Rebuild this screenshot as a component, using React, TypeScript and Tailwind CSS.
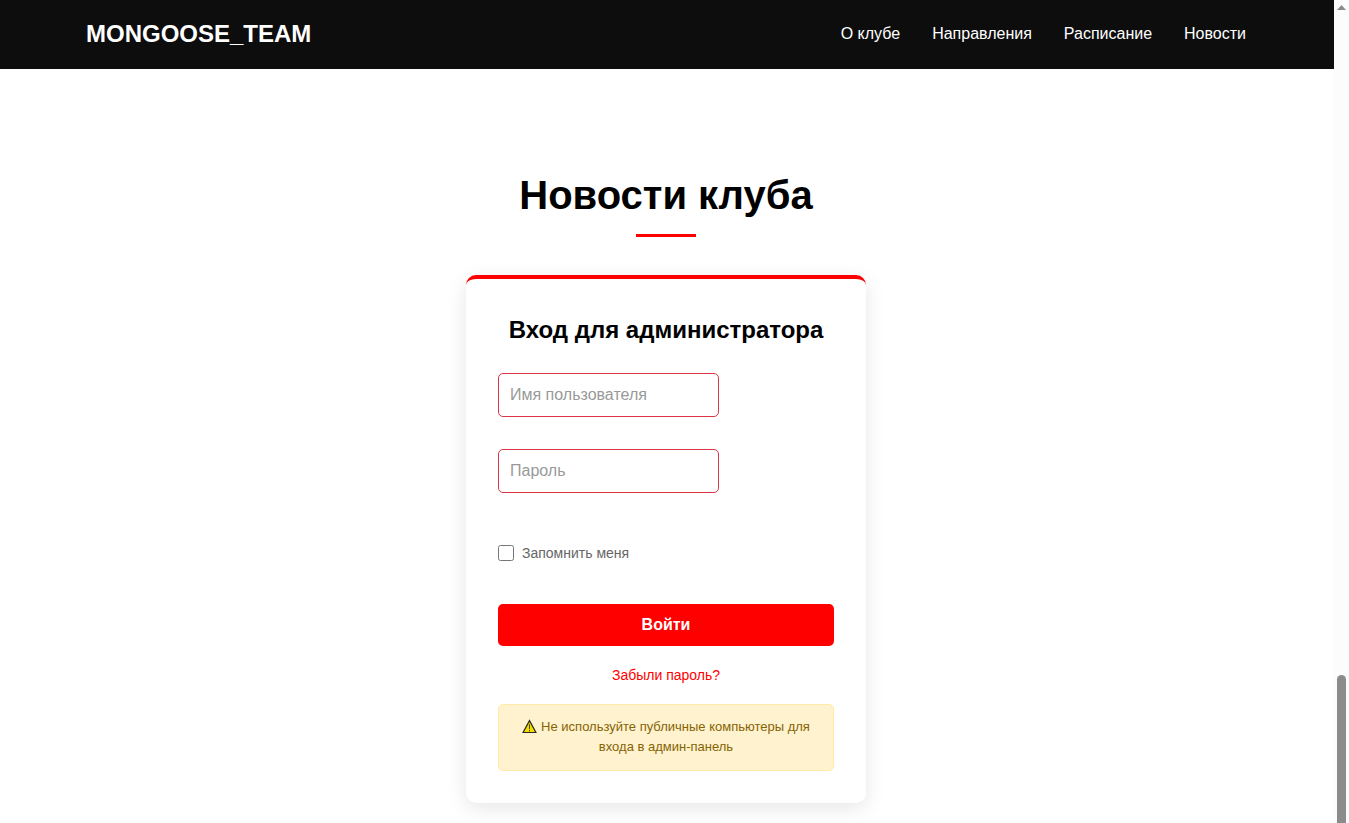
const links = ["О клубе", "Направления", "Расписание", "Новости"];

function Header() {
  return (
    <header className="bg-[#0d0d0d] pr-0.5 text-white antialiased">
      <div className="mx-auto flex h-[69px] max-w-[1200px] items-center justify-between px-5 pb-0.5">
        <a href="#" className="text-2xl font-bold">MONGOOSE_TEAM</a>
        <nav className="flex gap-8">
          {links.map((link) => (
            <a key={link} href="#" className="text-base">{link}</a>
          ))}
        </nav>
      </div>
    </header>
  );
}

function WarningIcon() {
  return (
    <svg className="mr-1 inline-block h-[15px] w-[15px] align-[-3px]" viewBox="0 0 15 15" aria-hidden="true">
      <path d="M7.5 1.6 L13.9 13.5 H1.1 Z" fill="#f7dc00" stroke="#2b2b1c" strokeWidth="1.2" strokeLinejoin="miter" />
      <path d="M7.5 5.2 V10.2 M7.5 11 V12.4" stroke="#4a4310" strokeWidth="1" />
    </svg>
  );
}

function LoginForm() {
  const field =
    "block h-11 w-[221px] max-w-full rounded-[5px] border border-[#dc3545] bg-white px-[11px] text-base text-black placeholder:text-[#999] outline-none";

  return (
    <form
      className="w-full max-w-[400px] rounded-[10px] border-t-4 border-[#ff0000] bg-white p-8 shadow-[0_5px_20px_rgba(0,0,0,0.1)]"
      onSubmit={(e) => e.preventDefault()}
    >
      <h3 className="mb-6 text-center text-2xl leading-[38px] font-bold text-black">Вход для администратора</h3>
      <input type="text" name="username" aria-label="Имя пользователя" placeholder="Имя пользователя" className={`${field} mb-8`} />
      <input type="password" name="password" aria-label="Пароль" placeholder="Пароль" className={field} />
      <div className="mt-12 mb-10 flex h-[23px] items-center gap-2">
        <input id="remember" type="checkbox" className="size-4" />
        <label htmlFor="remember" className="text-sm text-[#666]">Запомнить меня</label>
      </div>
      <button type="submit" className="block h-[42px] w-full rounded-[5px] bg-[#ff0000] text-base font-bold text-white">
        Войти
      </button>
      <p className="my-[18px] text-center text-sm leading-[22px]">
        <a href="#" className="text-[#ff0000]">Забыли пароль?</a>
      </p>
      <div className="rounded-[5px] border border-[#ffeaa7] bg-[#fff2ce] px-3 pt-3 pb-[13px] text-center text-[13px] leading-5 text-[#856404]">
        <WarningIcon />
        Не используйте публичные компьютеры для входа в админ-панель
      </div>
    </form>
  );
}

function Scrollbar() {
  return (
    <div className="flex w-[15px] shrink-0 flex-col items-center justify-between bg-[#fcfcfc] pt-[5px]" aria-hidden="true">
      <svg className="h-[5px] w-[9px]" viewBox="0 0 9 5">
        <path d="M4.5 0 L9 5 H0 Z" fill="#8b8b8b" />
      </svg>
      <div className="h-[148px] w-[9px] rounded-t-full bg-[#8b8b8b]" />
    </div>
  );
}

export default function App() {
  return (
    <div className="flex min-h-screen bg-white font-['Liberation_Sans',Arial,sans-serif]">
      <div className="min-w-0 flex-1">
        <Header />
        <main className="flex flex-col items-center pt-24 pr-0.5">
          <h2 className="text-center text-[40px] leading-[60px] font-bold text-black">Новости клуба</h2>
          <div className="mt-[9px] mb-[38px] h-[3px] w-[60px] bg-[#ff0000]" />
          <LoginForm />
        </main>
      </div>
      <Scrollbar />
    </div>
  );
}
